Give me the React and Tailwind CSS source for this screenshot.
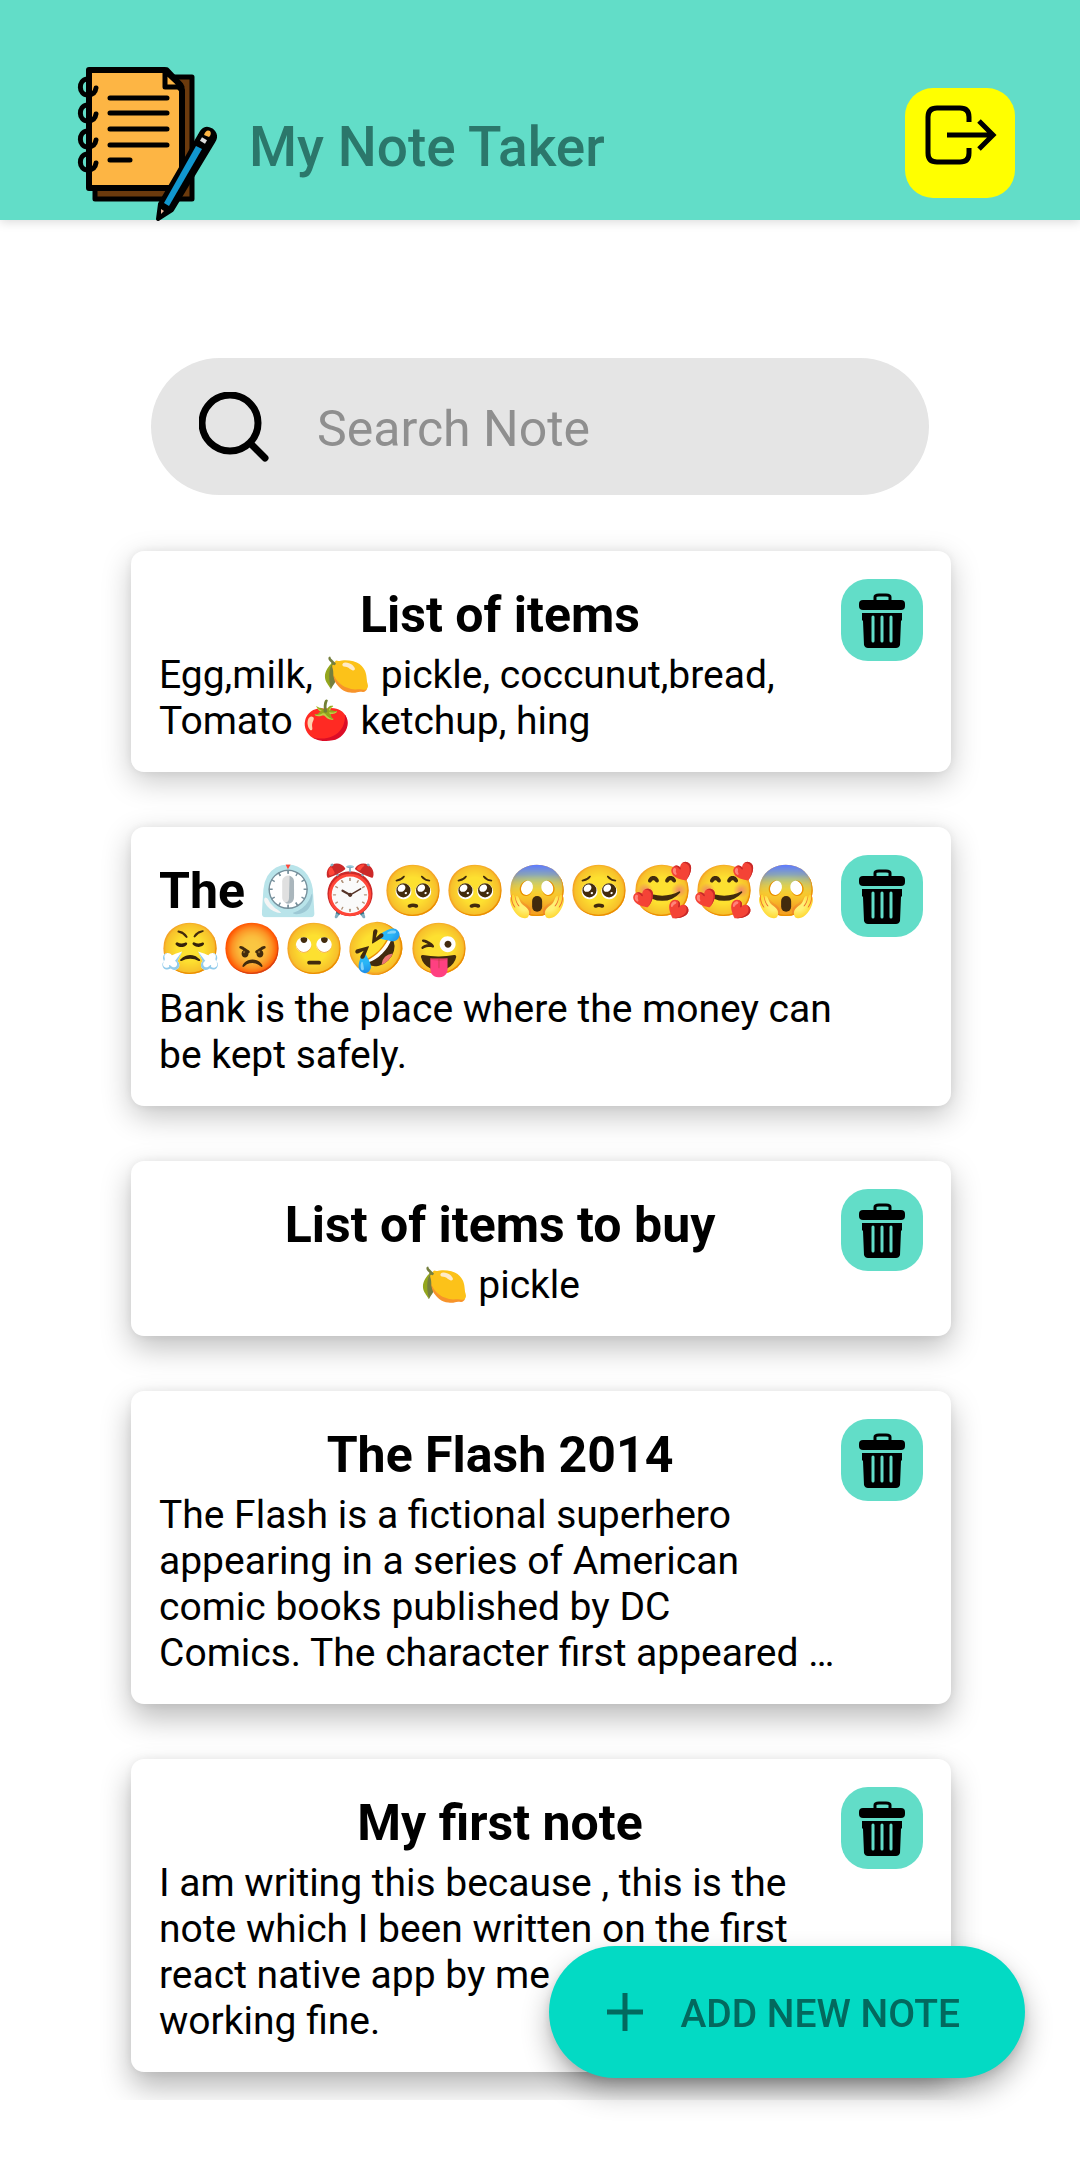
import React, { useState } from "react";

const notes = [
  {
    title: "List of items",
    body: "Egg,milk, 🍋 pickle, coccunut,bread, Tomato 🍅 ketchup, hing",
    shadow: "shadow-[0_9px_30px_rgba(0,0,0,0.22),0_0_8px_rgba(0,0,0,0.06)]",
  },
  {
    title: "The ⏲️⏰🥺🥺😱🥺🥰🥰😱😤😡🙄🤣😜",
    body: "Bank is the place where the money can be kept safely.",
    shadow: "shadow-[0_10px_30px_rgba(0,0,0,0.24),0_0_8px_rgba(0,0,0,0.06)]",
  },
  {
    title: "List of items to buy",
    body: "🍋 pickle",
    shadow: "shadow-[0_12px_30px_rgba(0,0,0,0.25),0_0_8px_rgba(0,0,0,0.06)]",
  },
  {
    title: "The Flash 2014",
    body: "The Flash is a fictional superhero appearing in a series of American comic books published by DC\nComics. The character first appeared …",
    shadow: "shadow-[0_14px_30px_rgba(0,0,0,0.27),0_0_8px_rgba(0,0,0,0.06)]",
  },
  {
    title: "My first note",
    body: "I am writing this because , this is the note which I been written on the first react native app by me\nworking fine.",
    shadow: "shadow-[0_15px_30px_rgba(0,0,0,0.29),0_0_8px_rgba(0,0,0,0.06)]",
  },
];

function NotebookLogo() {
  return (
    <svg viewBox="0 0 140 158" className="h-[158px] w-[140px] shrink-0" aria-hidden="true" stroke="#000" strokeLinejoin="round" strokeLinecap="round">
      <path d="M18 11h97v122H18z" fill="#6b3a0d" strokeWidth="5" />
      <path d="M12 4h76l17 20v80l-13 19H12z" fill="#fdb544" stroke="none" />
      <path d="M92 122H12V4h76l17 20v80" fill="none" strokeWidth="6" />
      <path d="M88 5v16h17z" fill="#fdb544" strokeWidth="5" />
      <path d="M90 4l14 15" strokeWidth="5" />
      <path d="M33 32h57M33 47h57M33 63h57M33 79h57M33 94h20" strokeWidth="5" />
      {[22, 48, 74, 97].map((y) => (
        <path key={y} d={`M10 ${y - 9}C1 ${y - 8} 1 ${y + 7} 11 ${y + 7}Q18 ${y + 7} 19 ${y}`} fill="none" strokeWidth="5" />
      ))}
      <path d="M81 153L83 138 123 69Q127 60 134 64 141 69 136 76L95 144Z" fill="#000" strokeWidth="4" />
      <path d="M87 137L119 80 125 83 92 140Z" fill="#1197cf" stroke="none" />
      <path d="M124 73l5 3" stroke="#ddd" strokeWidth="4" strokeLinecap="butt" />
      <path d="M127 69Q129 63 133 65 135 68 132 71Z" fill="#fdb544" stroke="none" />
      <path d="M84 143l3 2-3 3z" fill="#e9b99c" stroke="none" />
    </svg>
  );
}

function LogoutIcon() {
  return (
    <svg viewBox="0 0 74 62" className="h-[62px] w-[74px]" fill="none" stroke="#000" strokeWidth="5" aria-hidden="true">
      <path d="M46 18V13Q46 4 37 4H14Q5 4 5 13v36q0 9 9 9h23q9 0 9-9v-5" />
      <path d="M24 31h47M56 17l14 14-14 14" />
    </svg>
  );
}

function TrashIcon() {
  return (
    <svg viewBox="0 0 46 56" className="h-[56px] w-[46px]" aria-hidden="true">
      <path d="M16 9V5Q16 3 20 3h7q4 0 4 2v4" fill="none" stroke="#000" strokeWidth="3" />
      <rect x="0" y="8" width="46" height="10" rx="4" />
      <path d="M3 21H43V28L42 29 41 53Q40 56 37 56H9Q6 56 5 53L4 29 3 28Z" />
      <path d="M14 25v24M23 25v24M32 25v24" stroke="#62ddc8" strokeWidth="3" strokeLinecap="round" />
    </svg>
  );
}

function NoteCard({ note }) {
  return (
    <li className={`flex items-start rounded-[13px] bg-white p-7 ${note.shadow}`}>
      <div className="flex min-w-0 flex-1 flex-col items-center">
        <h2 className="pt-[7px] pb-2 text-[50px] leading-[58px] font-bold">{note.title}</h2>
        <p className="text-[39px] leading-[46px] whitespace-pre-line">{note.body}</p>
      </div>
      <button type="button" aria-label={`Delete ${note.title}`} className="flex h-[82px] w-[82px] shrink-0 items-center justify-center rounded-[27px] bg-[#62ddc8]">
        <TrashIcon />
      </button>
    </li>
  );
}

export default function App() {
  const [query, setQuery] = useState("");
  return (
    <div className="min-h-screen bg-white font-[Roboto,'Noto_Color_Emoji',sans-serif] text-black">
      <header className="flex h-[220px] items-end bg-[#62ddc8] pr-[65px] pl-[77px] shadow-[0_2px_10px_rgba(0,0,0,0.15)]">
        <div className="-mb-1 shrink-0">
          <NotebookLogo />
        </div>
        <h1 className="ml-8 flex-1 pb-[41px] text-[55px] leading-[64px] font-medium text-[#2b776b]">My Note Taker</h1>
        <button type="button" aria-label="Log out" className="mb-[22px] flex h-[110px] w-[110px] shrink-0 items-start justify-center rounded-[28px] bg-[#ffff00] pt-4">
          <LogoutIcon />
        </button>
      </header>

      <main>
        <label className="mx-[151px] mt-[138px] flex h-[137px] items-center rounded-full bg-[#e5e5e5] pl-12">
          <svg viewBox="0 0 70 70" className="h-[70px] w-[70px] shrink-0" fill="none" stroke="#000" strokeWidth="7" strokeLinecap="round" aria-hidden="true">
            <circle cx="31" cy="31" r="28" />
            <path d="M52 52l14 14" />
          </svg>
          <input
            type="text"
            aria-label="Search Note"
            placeholder="Search Note"
            value={query}
            onChange={(e) => setQuery(e.target.value)}
            className="ml-12 min-w-0 flex-1 bg-transparent pt-1 text-[50px] leading-[58px] outline-none placeholder:text-[#8f8f8f]"
          />
        </label>

        <ul className="mt-7 flex flex-col gap-[55px] overflow-hidden py-7 pr-[129px] pl-[131px]">
          {notes.map((note) => (
            <NoteCard key={note.title} note={note} />
          ))}
        </ul>
      </main>

      <button type="button" className="fixed right-[55px] bottom-[82px] flex h-[132px] items-center gap-9 rounded-full bg-[#03dac4] pr-[65px] pl-[57px] text-[39px] font-medium text-[#03695e] shadow-[0_14px_28px_rgba(0,0,0,0.3),0_4px_10px_rgba(0,0,0,0.1)]">
        <svg viewBox="0 0 38 38" className="h-[38px] w-[38px]" stroke="currentColor" strokeWidth="5" aria-hidden="true">
          <path d="M1 19h36M19 0v38" />
        </svg>
        <span className="pt-1">ADD NEW NOTE</span>
      </button>
    </div>
  );
}
